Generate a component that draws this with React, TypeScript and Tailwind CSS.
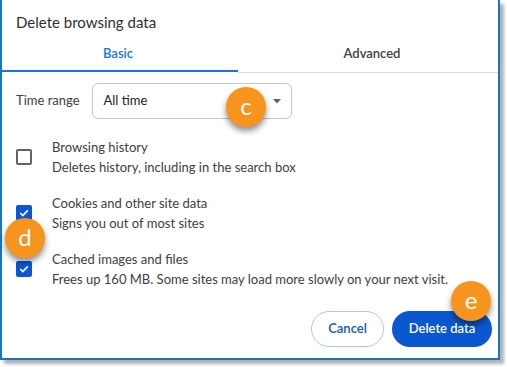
import React from "react";

const font = { fontFamily: '"Segoe UI", Lato, "Liberation Sans", sans-serif' };

function Badge({ letter, className }: { letter: string; className: string }) {
  return (
    <div
      className={`absolute w-[40px] h-[40px] rounded-full bg-[#f7941d] text-white flex items-center justify-center text-[24px] leading-none shadow-[0_4px_6px_rgba(0,0,0,0.45)] ${className}`}
    >
      <span className="-mt-[3px]">{letter}</span>
    </div>
  );
}

function Check({ checked }: { checked: boolean }) {
  if (checked) {
    return (
      <div className="w-[16px] h-[16px] rounded-[2px] bg-[#0b57d0] flex items-center justify-center shrink-0">
        <svg width="12" height="12" viewBox="0 0 12 12">
          <path d="M2.3 6.2 L4.8 8.6 L9.8 3.4" fill="none" stroke="white" strokeWidth="1.6" />
        </svg>
      </div>
    );
  }
  return <div className="w-[16px] h-[16px] rounded-[2px] border-2 border-[#5f6368] shrink-0" />;
}

function Row({ checked, title, sub }: { checked: boolean; title: string; sub: string }) {
  return (
    <div className="flex items-center h-[40px] pl-[14px]">
      <Check checked={checked} />
      <div className="ml-[20px] flex flex-col">
        <div className="h-[20px] leading-[20px] text-[13px] text-[#3c4043]">{title}</div>
        <div className="h-[20px] leading-[20px] text-[13px] text-[#3c4043]">{sub}</div>
      </div>
    </div>
  );
}

export default function App() {
  return (
    <div className="w-[507px] h-[367px] bg-white relative" style={font}>
      <div className="w-[500px] h-[360px] border-x-2 border-b-2 border-[#1b75bb] bg-white shadow-[4px_4px_3px_rgba(0,0,0,0.3)] flex flex-col relative">
        <div className="h-[44px] flex items-center pl-[14px] text-[15px] text-[#2d2f31]">
          Delete browsing data
        </div>
        <div className="flex items-start">
          <div className="w-[236px] h-[28px] border-b-2 border-[#1a73e8] flex justify-center pt-[1px] pr-[4px] text-[13px] font-semibold text-[#1a73e8] leading-[16px]">
            Basic
          </div>
          <div className="flex-1 h-[29px] border-b border-[#dadce0] flex justify-center pt-[1px] pl-[8px] text-[13px] font-semibold text-[#3c4043] leading-[16px]">
            Advanced
          </div>
        </div>
        <div className="mt-[10px] h-[36px] flex items-center pl-[14px]">
          <span className="text-[13px] text-[#3c4043]">Time range</span>
          <div className="ml-[12px] w-[200px] h-[36px] rounded-[6px] border border-[#c4c7c5] flex items-center justify-between pl-[11px] pr-[10px]">
            <span className="text-[13px] text-[#202124]">All time</span>
            <svg width="8" height="5" viewBox="0 0 8 5">
              <path d="M0 0 L8 0 L4 4.5 Z" fill="#5f6368" />
            </svg>
          </div>
        </div>
        <div className="mt-[18px] flex flex-col gap-[16px]">
          <Row checked={false} title="Browsing history" sub="Deletes history, including in the search box" />
          <Row checked={true} title="Cookies and other site data" sub="Signs you out of most sites" />
          <Row
            checked={true}
            title="Cached images and files"
            sub="Frees up 160 MB. Some sites may load more slowly on your next visit."
          />
        </div>
        <div className="mt-[22px] flex justify-end gap-[8px] pr-[6px]">
          <button className="w-[73px] h-[36px] rounded-full border border-[#a8c7fa] text-[13px] font-semibold text-[#0b57d0] bg-white">
            Cancel
          </button>
          <button className="w-[100px] h-[36px] rounded-full bg-[#0b57d0] text-[13px] font-semibold text-white">
            Delete data
          </button>
        </div>
        <Badge letter="c" className="left-[224px] top-[87px]" />
        <Badge letter="d" className="left-[3px] top-[218px]" />
        <Badge letter="e" className="left-[449px] top-[281px]" />
      </div>
    </div>
  );
}
